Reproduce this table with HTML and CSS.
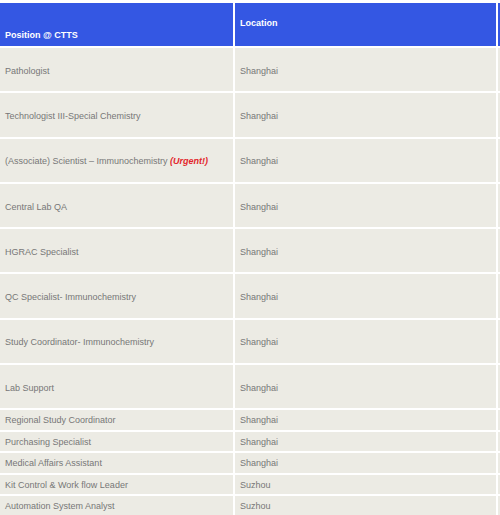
FILE: index.html
```html
<!DOCTYPE html>
<html>
<head>
<meta charset="utf-8">
<link rel="stylesheet" href="styles.css">
</head>
<body>
<table class="jobs">
  <colgroup>
    <col class="c-pos">
    <col class="c-loc">
    <col class="c-extra">
  </colgroup>
  <thead>
    <tr class="head">
      <th class="th-pos"><br>Position @ CTTS</th>
      <th class="th-loc">Location</th>
      <th class="th-extra"></th>
    </tr>
  </thead>
  <tbody>
    <tr class="tall"><td>Pathologist</td><td>Shanghai</td><td></td></tr>
    <tr class="tall"><td>Technologist III-Special Chemistry</td><td>Shanghai</td><td></td></tr>
    <tr class="tall"><td>(Associate) Scientist – Immunochemistry <em class="urgent">(Urgent!)</em></td><td>Shanghai</td><td></td></tr>
    <tr class="tall"><td>Central Lab QA</td><td>Shanghai</td><td></td></tr>
    <tr class="tall"><td>HGRAC Specialist</td><td>Shanghai</td><td></td></tr>
    <tr class="tall"><td>QC Specialist- Immunochemistry</td><td>Shanghai</td><td></td></tr>
    <tr class="tall"><td>Study Coordinator- Immunochemistry</td><td>Shanghai</td><td></td></tr>
    <tr class="tall"><td>Lab Support</td><td>Shanghai</td><td></td></tr>
    <tr class="short"><td>Regional Study Coordinator</td><td>Shanghai</td><td></td></tr>
    <tr class="short"><td>Purchasing Specialist</td><td>Shanghai</td><td></td></tr>
    <tr class="short"><td>Medical Affairs Assistant</td><td>Shanghai</td><td></td></tr>
    <tr class="short"><td>Kit Control &amp; Work flow Leader</td><td>Suzhou</td><td></td></tr>
    <tr class="short"><td>Automation System Analyst</td><td>Suzhou</td><td></td></tr>
  </tbody>
</table>
</body>
</html>
```
FILE: styles.css
```css
html, body {
  margin: 0;
  padding: 0;
  background: #ffffff;
  overflow: hidden;
}

body {
  font-family: "Liberation Sans", Arial, sans-serif;
  font-size: 9px;
  color: #777777;
}

.jobs {
  border-collapse: separate;
  border-spacing: 2px;
  table-layout: fixed;
  width: 780px;
  margin: 1px 0 0 -2px;
}

.c-pos { width: 233px; }
.c-loc { width: 261px; }
.c-extra { width: 280px; }

.jobs th,
.jobs td {
  padding: 0 5px;
  text-align: left;
  overflow: hidden;
  white-space: nowrap;
}

.jobs .head th {
  background: #3457e3;
  color: #ffffff;
  font-weight: bold;
  height: 43px;
  line-height: 11px;
  padding-bottom: 0;
  box-sizing: border-box;
  vertical-align: top;
}

.jobs .head .th-pos {
  padding-top: 16px;
}

.jobs .head .th-loc,
.jobs .head .th-extra {
  padding-top: 15px;
}

.jobs td {
  background: #ecebe4;
  vertical-align: middle;
  line-height: 11px;
  box-sizing: border-box;
}

.jobs .tall td {
  height: 43.3px;
  padding-top: 3px;
}

.jobs .short td {
  height: 19.5px;
  padding-top: 1px;
}

.urgent {
  color: #e3262b;
  font-weight: bold;
  font-style: italic;
}
```
